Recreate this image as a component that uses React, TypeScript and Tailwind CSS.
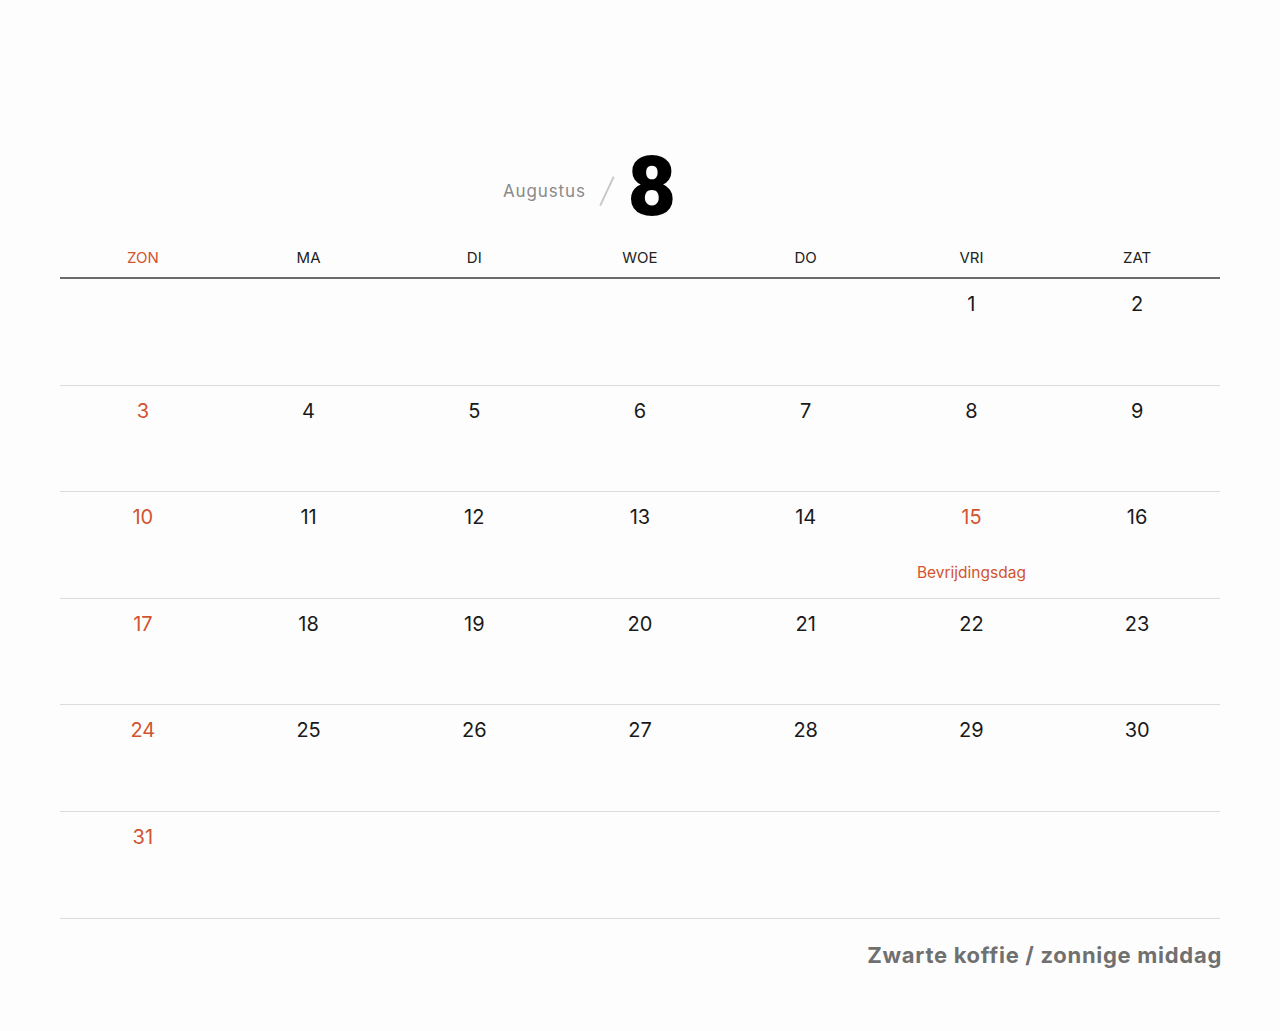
import React from "react";

const weekdays = ["ZON", "MA", "DI", "WOE", "DO", "VRI", "ZAT"];

const weeks: (number | null)[][] = [
  [null, null, null, null, null, 1, 2],
  [3, 4, 5, 6, 7, 8, 9],
  [10, 11, 12, 13, 14, 15, 16],
  [17, 18, 19, 20, 21, 22, 23],
  [24, 25, 26, 27, 28, 29, 30],
  [31, null, null, null, null, null, null],
];

const holidays: Record<number, string> = { 15: "Bevrijdingsdag" };

export default function App() {
  return (
    <div
      className="w-[1280px] h-[1031px] bg-[#fdfdfd] px-[60px] pt-[141px]"
      style={{ fontFamily: "Inter, 'Noto Sans', sans-serif" }}
    >
      <div className="flex items-center justify-center pr-[101px] h-[92px]">
        <span className="text-[17px] text-[#8a8a8a] tracking-[0.9px] mt-[10px]">Augustus</span>
        <span className="mx-[20px] mt-[8px] block w-[1.5px] h-[32px] bg-[#c8c8c8] rotate-[25deg]" />
        <span
          className="text-[84px] font-black text-black leading-none"
          style={{ fontFamily: "Roboto, sans-serif" }}
        >
          8
        </span>
      </div>
      <div className="grid grid-cols-7 border-b-2 border-[#6b6b6b] h-[46px] items-center pt-[6px]">
        {weekdays.map((d, i) => (
          <div
            key={d}
            className={`text-center text-[15px] ${i === 0 ? "text-[#d2542f]" : "text-[#222]"}`}
          >
            {d}
          </div>
        ))}
      </div>
      {weeks.map((w, wi) => (
        <div key={wi} className="grid grid-cols-7 h-[106.6px] border-b border-[#dcdcdc]">
          {w.map((n, di) => (
            <div key={di} className="flex flex-col items-center pt-[12px]">
              {n !== null && (
                <span
                  className={`text-[20px] leading-[26px] ${
                    di === 0 || holidays[n] ? "text-[#d2542f]" : "text-[#1a1a1a]"
                  }`}
                >
                  {n}
                </span>
              )}
              {n !== null && holidays[n] && (
                <span className="mt-[31px] text-[15.5px] text-[#d2542f]">{holidays[n]}</span>
              )}
            </div>
          ))}
        </div>
      ))}
      <div className="flex justify-end pt-[20px]">
        <span className="text-[22px] font-bold text-[#707070] tracking-[0.7px] mr-[-2px]">
          Zwarte koffie / zonnige middag
        </span>
      </div>
    </div>
  );
}
